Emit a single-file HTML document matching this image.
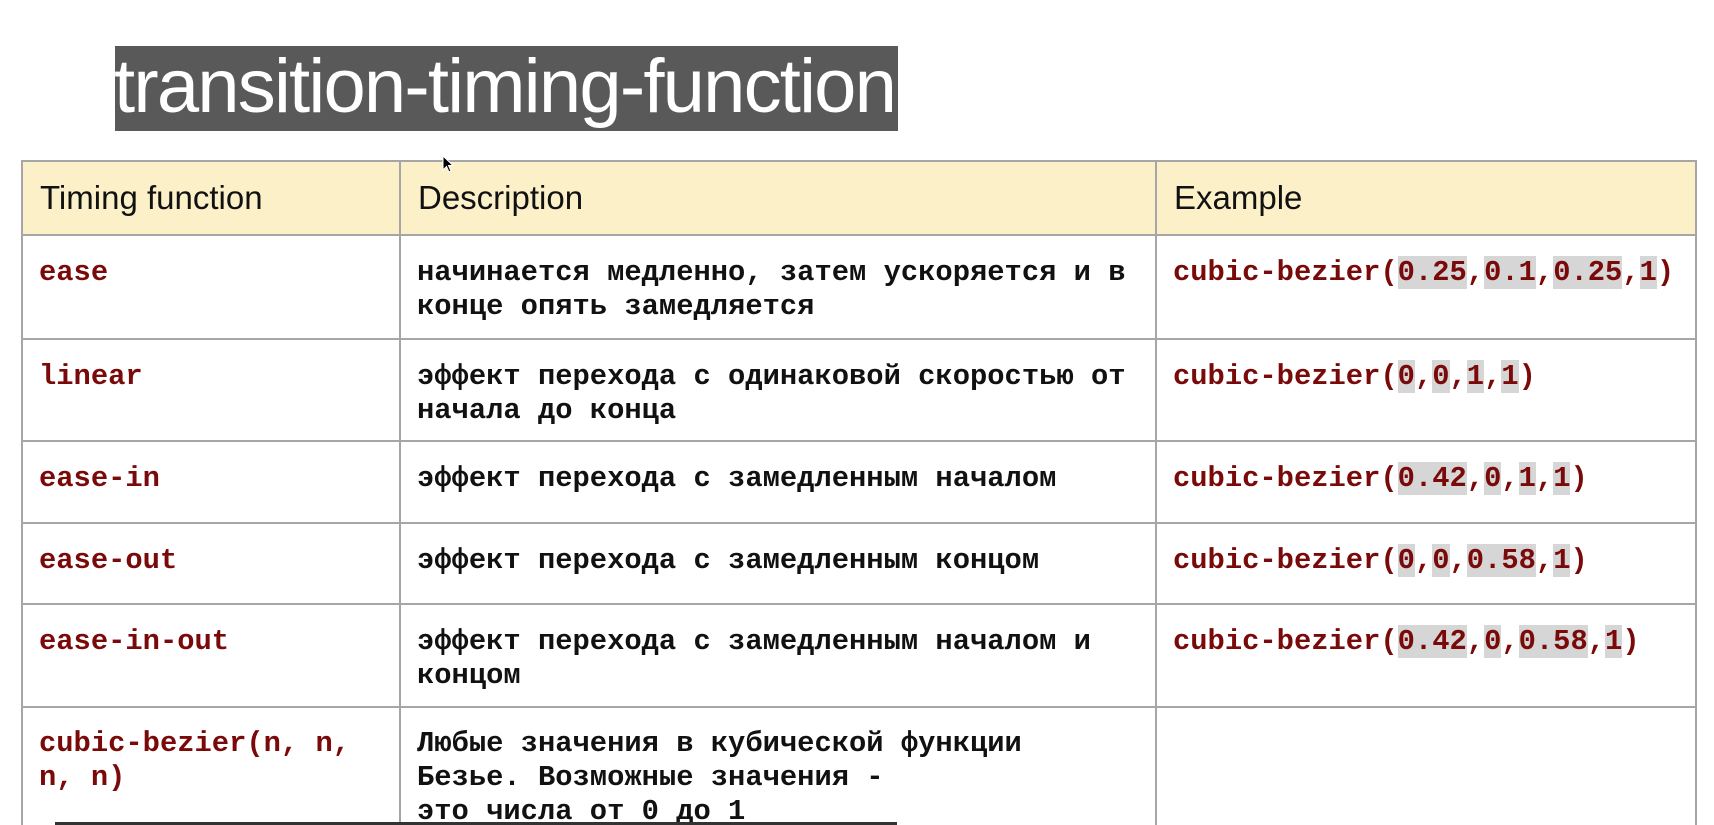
<!DOCTYPE html>
<html><head><meta charset="utf-8"><style>
html,body{margin:0;width:1714px;height:825px;overflow:hidden}
body{background:#fff;position:relative;font-family:"Liberation Sans",sans-serif}
.title{position:absolute;left:115px;top:46px;width:783px;height:85px;background:#595959;color:#fff;font-size:76px;letter-spacing:-1.8px;line-height:85px;white-space:nowrap;overflow:hidden}
.title span{position:relative;top:-2px;left:-1px}
table{position:absolute;left:21px;top:160px;border-collapse:collapse;width:1676px}
td{border:2px solid #a6a6a6;vertical-align:top;padding:0}
tr.h td{background:#fcf0c9;height:72px;font-size:33px;vertical-align:middle;padding-left:17px;color:#111}
.m{font-family:"Liberation Mono",monospace;font-weight:bold;font-size:28.8px;line-height:34px;color:#111;padding:20px 10px 0 16px}
.r{color:#7a0a0a}
.c1{width:359px}.c2{width:737px}
.g{background:#d6d6d6}
</style></head><body>
<div class="title"><span>transition-timing-function</span></div>
<table>
<tr class="h"><td class="c1">Timing function</td><td class="c2">Description</td><td>Example</td></tr>
<tr style="height:104px"><td class="m r">ease</td><td class="m">начинается медленно, затем ускоряется и в конце опять замедляется</td><td class="m r">cubic-bezier(<span class="g">0.25</span>,<span class="g">0.1</span>,<span class="g">0.25</span>,<span class="g">1</span>)</td></tr>
<tr style="height:102px"><td class="m r">linear</td><td class="m">эффект перехода с одинаковой скоростью от начала до конца</td><td class="m r">cubic-bezier(<span class="g">0</span>,<span class="g">0</span>,<span class="g">1</span>,<span class="g">1</span>)</td></tr>
<tr style="height:82px"><td class="m r">ease-in</td><td class="m">эффект перехода с замедленным началом</td><td class="m r">cubic-bezier(<span class="g">0.42</span>,<span class="g">0</span>,<span class="g">1</span>,<span class="g">1</span>)</td></tr>
<tr style="height:81px"><td class="m r">ease-out</td><td class="m">эффект перехода с замедленным концом</td><td class="m r">cubic-bezier(<span class="g">0</span>,<span class="g">0</span>,<span class="g">0.58</span>,<span class="g">1</span>)</td></tr>
<tr style="height:103px"><td class="m r">ease-in-out</td><td class="m">эффект перехода с замедленным началом и концом</td><td class="m r">cubic-bezier(<span class="g">0.42</span>,<span class="g">0</span>,<span class="g">0.58</span>,<span class="g">1</span>)</td></tr>
<tr style="height:120px"><td class="m r" style="padding-top:19px">cubic-bezier(n, n, n, n)</td><td class="m" style="padding-top:19px">Любые значения в кубической функции<br>Безье. Возможные значения -<br>это числа от 0 до 1</td><td></td></tr>
</table>
<div style="position:absolute;left:55px;top:822px;width:842px;height:3px;background:#333"></div>
<svg style="position:absolute;left:442px;top:155px" width="14" height="20" viewBox="0 0 14 20"><path d="M1 1 L1 15 L4.5 11.5 L7 17 L9 16 L6.5 10.5 L11 10.5 Z" fill="#000" stroke="#fff" stroke-width="1"/></svg>
</body></html>
